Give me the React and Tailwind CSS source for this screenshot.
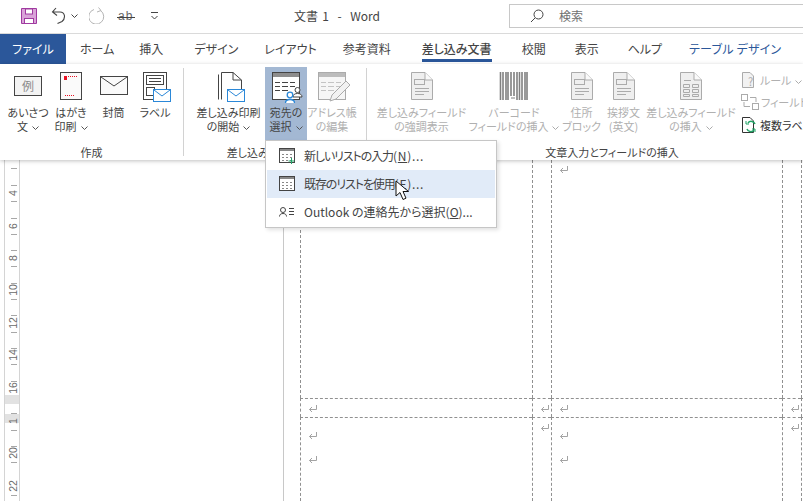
const INK = '#444444';
const DIS = '#ababab';
const BLUE = '#2b88d8';

function Chev({ color = '#555' }) {
  return (
    <svg className="inline-block ml-[4px] align-[1px]" width="7" height="4" viewBox="0 0 7 4" fill="none">
      <path d="M.5.5 3.5 3.5 6.5.5" stroke={color} />
    </svg>
  );
}

// blue envelope that sits on the corner of a few icons
function Env({ x, y }) {
  return (
    <g>
      <rect x={x + 0.5} y={y + 0.5} width="17" height="12" fill="#fff" stroke={BLUE} />
      <path d={`M${x + 1} ${y + 1}l8 6 8-6`} fill="none" stroke={BLUE} />
    </g>
  );
}

function Icon({ children }) {
  return (
    <svg width="36" height="32" viewBox="0 0 36 32" fill="none">
      {children}
    </svg>
  );
}

function GreetingIcon() {
  return (
    <Icon>
      <rect x="4.5" y="5.5" width="27" height="19" fill="#f3f3f3" stroke={INK} />
      <text x="18" y="20" textAnchor="middle" fontSize="12" fill="#8a8a8a" fontFamily="Noto Sans CJK JP">例</text>
    </Icon>
  );
}

function PostcardIcon() {
  return (
    <Icon>
      <rect x="7.5" y="1.5" width="21" height="27" fill="#fafafa" stroke={INK} />
      <rect x="11" y="5" width="3" height="4" fill="#e81123" />
      <path d="M15 5.5h9M12 24.5h10" stroke="#e81123" strokeDasharray="1 1" />
    </Icon>
  );
}

function EnvelopeIcon() {
  return (
    <Icon>
      <rect x="4.5" y="5.5" width="27" height="18" fill="#fafafa" stroke={INK} />
      <path d="M5 6l13 9 13-9" stroke={INK} />
    </Icon>
  );
}

function LabelIcon() {
  return (
    <Icon>
      <rect x="6.5" y="1.5" width="23" height="27" fill="#fff" stroke={INK} />
      <rect x="9.500" y="4.500" width="17" height="9" stroke={INK} />
      <path d="M12 7.500h12M12 10.500h12" stroke={INK} />
      <rect x="9.500" y="16.500" width="8" height="8" stroke={INK} />
      <Env x={16} y={18} />
    </Icon>
  );
}

function MergeStartIcon() {
  return (
    <Icon>
      <path d="M7.500 28.500V3.500M10.500 28.500V1.500H22L30.500 9V18" stroke={INK} fill="#fff" />
      <path d="M22 1.500V9H30.500" stroke={INK} />
      <Env x={16} y={18} />
    </Icon>
  );
}

function TableLines({ stroke }) {
  return <path d="M7 11.500h5M14 11.500h6M22 11.500h5M7 15.500h5M14 15.500h6M22 15.500h5M7 19.500h5M14 19.500h6" stroke={stroke} />;
}

function RecipientIcon() {
  return (
    <Icon>
      <rect x="4.500" y="1.500" width="27" height="27" fill="#fff" stroke={INK} />
      <rect x="5" y="2" width="26" height="4" fill="#8d8d8d" />
      <TableLines stroke={INK} />
      <circle cx="29.500" cy="19" r="2.500" fill="#fff" stroke={INK} />
      <path d="M25 26c0-2.500 2-3.500 4.500-3.500s4.500 1 4.500 3.500z" fill="#fff" stroke={INK} />
      <circle cx="22" cy="24" r="2.800" fill="#fff" stroke={BLUE} strokeWidth="1.300" />
      <path d="M17.500 32c0-2.500 2-3.500 4.500-3.500s4.500 1 4.500 3.500" fill="#fff" stroke={BLUE} strokeWidth="1.300" />
    </Icon>
  );
}

function AddressEditIcon() {
  return (
    <Icon>
      <rect x="4.500" y="1.500" width="27" height="27" fill="#f6f6f6" stroke={DIS} />
      <rect x="5" y="2" width="26" height="4" fill="#bcbcbc" />
      <TableLines stroke="#c4c4c4" />
      <path d="M16 30l2-6 14-14 4 4-14 14z" fill="#f2f2f2" stroke={DIS} />
    </Icon>
  );
}

function DocBase({ children }) {
  return (
    <Icon>
      <path d="M7.500 1.500H21L28.500 9V28.500H7.500Z" fill="#efefef" stroke={DIS} />
      <path d="M21 1.500V9H28.500" stroke={DIS} fill="#fafafa" />
      {children}
    </Icon>
  );
}

function DocFieldIcon() {
  return (
    <DocBase>
      <rect x="10.500" y="8.500" width="10" height="5" stroke={DIS} />
      <path d="M11 17.500h14M11 20.500h14M11 23.500h9" stroke={DIS} />
    </DocBase>
  );
}

function DocGridIcon() {
  return (
    <DocBase>
      <path d="M11 9.500h7" stroke={DIS} />
      <path d="M10.500 13.500h6v3h-6zM19.500 13.500h6v3h-6zM10.500 18.500h6v3h-6zM19.500 18.500h6v3h-6zM10.500 23.500h6v2h-6zM19.500 23.500h6v2h-6z" stroke={DIS} />
    </DocBase>
  );
}

function BarcodeIcon() {
  return (
    <Icon>
      <path d="M4.500 1v28M7 1v28M10 1v28M12 1v28M15 1v24M18 1v24M21 1v28M23.500 1v28M26 1v28M29 1v28M31 1v28" stroke="#808080" strokeWidth="1.600" />
      <path d="M15 27h4" stroke="#808080" />
    </Icon>
  );
}

// big ribbon button: icon on top, up to two lines of text below
function RibbonButton({ w, icon, lines, chev, disabled, active }) {
  return (
    <div className={`flex flex-col items-center pt-[4px] shrink-0 h-[74px] ${w} ${active ? 'bg-[#a3b8d3]' : ''}`}>
      {icon}
      <div className={`mt-[2px] text-center text-[11px] leading-[14px] whitespace-nowrap ${disabled ? 'text-[#b0b0b0]' : 'text-[#444444]'}`}>
        {lines.map((line, i) => (
          <div key={i}>
            {line}
            {chev && i === lines.length - 1 && <Chev color={disabled ? DIS : '#555'} />}
          </div>
        ))}
      </div>
    </div>
  );
}

function Group({ w, label, children, pl = '' }) {
  return (
    <div className={`flex flex-col shrink-0 h-full ${w}`}>
      <div className={`flex flex-1 pt-[3px] ${pl}`}>{children}</div>
      <div className="h-[26px] text-center text-[11px] leading-[14px] pt-[4px] text-[#444444] whitespace-nowrap">{label}</div>
    </div>
  );
}

function Separator() {
  return <div className="w-px shrink-0 h-[88px] mt-[4px] bg-[#d2d2d2]" />;
}

function SmallRuleIcon() {
  return (
    <svg width="16" height="18" viewBox="0 0 16 18" fill="none">
      <path d="M1.500 1.500H9L12.500 5V16.500H1.500Z" fill="#f2f2f2" stroke={DIS} />
      <text x="7" y="15" fontSize="11" fill={DIS} fontFamily="Noto Sans CJK JP">?</text>
    </svg>
  );
}

function SmallFieldIcon() {
  return (
    <svg width="18" height="16" viewBox="0 0 18 16" fill="none">
      <rect x="0.500" y="0.500" width="6" height="6" stroke={DIS} />
      <rect x="11.500" y="9.500" width="6" height="6" stroke={DIS} />
      <path d="M9 3.500h6V8M9 12.500H3V8" stroke={DIS} />
    </svg>
  );
}

function SmallLabelsIcon() {
  return (
    <svg width="16" height="18" viewBox="0 0 16 18" fill="none">
      <path d="M1.500 1.500H9L12.500 5V16.500H1.500Z" fill="#fff" stroke="#333" />
      <path d="M14 8a4 4 0 0 0-7-1M6 13a4 4 0 0 0 7 1" stroke="#21a366" strokeWidth="1.500" />
      <path d="M5 5v3h3M14 16v-3h-3" stroke="#21a366" />
    </svg>
  );
}

function Ribbon() {
  return (
    <div className="flex h-[96px] bg-white overflow-hidden">
      <Group w="w-[183px]" label="作成" pl="pl-[7px]">
        <RibbonButton w="w-[42px]" icon={<GreetingIcon />} lines={['あいさつ', '文']} chev />
        <RibbonButton w="w-[44px]" icon={<PostcardIcon />} lines={['はがき', '印刷']} chev />
        <RibbonButton w="w-[41px]" icon={<EnvelopeIcon />} lines={['封筒']} />
        <RibbonButton w="w-[42px]" icon={<LabelIcon />} lines={['ラベル']} />
      </Group>
      <Separator />
      <Group w="w-[182px]" label="差し込み印刷の開始" pl="pl-[8px]">
        <RibbonButton w="w-[73px]" icon={<MergeStartIcon />} lines={['差し込み印刷', 'の開始']} chev />
        <RibbonButton w="w-[42px]" icon={<RecipientIcon />} lines={['宛先の', '選択']} chev active />
        <RibbonButton w="w-[50px]" icon={<AddressEditIcon />} lines={['アドレス帳', 'の編集']} disabled />
      </Group>
      <Separator />
      <Group w="w-[490px]" label="文章入力とフィールドの挿入" pl="pl-[9px]">
        <RibbonButton w="w-[91px]" icon={<DocFieldIcon />} lines={['差し込みフィールド', 'の強調表示']} disabled />
        <RibbonButton w="w-[94px]" icon={<BarcodeIcon />} lines={['バーコード', 'フィールドの挿入']} chev disabled />
        <RibbonButton w="w-[41px]" icon={<DocFieldIcon />} lines={['住所', 'ブロック']} disabled />
        <RibbonButton w="w-[43px]" icon={<DocFieldIcon />} lines={['挨拶文', '(英文)']} disabled />
        <RibbonButton w="w-[92px]" icon={<DocGridIcon />} lines={['差し込みフィールド', 'の挿入']} chev disabled />
        <div className="flex flex-col pl-[4px] pt-[3px] gap-[3px] text-[11px] leading-[18px] whitespace-nowrap">
          <div className="flex items-center gap-[3px] h-[19px] text-[#b0b0b0]"><SmallRuleIcon /><span>ルール<Chev color={DIS} /></span></div>
          <div className="flex items-center gap-[2px] h-[20px] text-[#b0b0b0]"><SmallFieldIcon /><span>フィールドの対応</span></div>
          <div className="flex items-center gap-[3px] h-[19px] text-[#333333]"><SmallLabelsIcon /><span>複数ラベルに反映</span></div>
        </div>
      </Group>
    </div>
  );
}

function TitleBar() {
  return (
    <div className="flex h-[34px] items-center bg-white border-b border-[#dadada] shrink-0">
      <div className="flex items-center pl-[21px] w-[294px] shrink-0 pb-[2px]">
        <svg width="16" height="16" viewBox="0 0 16 16" fill="none">
          <path d="M.5.5h15v15H.5z" fill="#d9a3d8" stroke="#a03aa0" />
          <rect x="4.500" y="1" width="7" height="5" fill="#fff" stroke="#a03aa0" />
          <rect x="3.500" y="10.500" width="9" height="5" fill="#fff" stroke="#a03aa0" />
        </svg>
        <svg className="ml-[14px]" width="16" height="17" viewBox="0 0 16 17" fill="none">
          <path d="M5 1 1.500 5 6 8.500M1.500 5H9c5 0 6 6 2 9.500L6.500 16.500" stroke={INK} strokeWidth="1.100" />
        </svg>
        <Chev color={INK} />
        <svg className="ml-[11px]" width="17" height="17" viewBox="0 0 17 17" fill="none">
          <path d="M9.500 .5l2.500 3-4 1.500" stroke="#b5b5b5" />
          <path d="M11.500 3.500A7.500 7.500 0 1 1 5 2.500" stroke="#b5b5b5" />
        </svg>
        <span className="ml-[12px] relative text-[12px] leading-none text-[#666666] tracking-[1px] font-['Liberation_Sans',sans-serif]">
          ab
          <span className="absolute left-[-1px] right-[-2px] top-[7px] h-px bg-[#444444]" />
        </span>
        <svg className="ml-[18px]" width="7" height="8" viewBox="0 0 7 8" fill="none">
          <path d="M0 .500h7M.5 4l3 3 3-3" stroke={INK} />
        </svg>
      </div>
      <div className="w-[215px] shrink-0 text-[12px] text-[#444444] whitespace-pre pb-[2px] [word-spacing:1.600px]">文書 1  -  Word</div>
      <div className="flex items-center h-[24px] flex-1 border border-[#c8c8c8] border-r-0 -mt-[1px] pl-[20px]">
        <svg width="14" height="14" viewBox="0 0 14 14" fill="none">
          <circle cx="8.500" cy="5.500" r="4.500" stroke={INK} />
          <path d="M5 9 1 13" stroke={INK} />
        </svg>
        <span className="ml-[15px] text-[12px] text-[#707070]">検索</span>
      </div>
    </div>
  );
}

function Tabs() {
  const tabs = [
    ['ホーム', 'ml-[14px]'],
    ['挿入', 'ml-[25px]'],
    ['デザイン', 'ml-[31px]'],
    ['レイアウト', 'ml-[26px]'],
    ['参考資料', 'ml-[26px]'],
  ];
  return (
    <div className="flex h-[30px] bg-white shrink-0 text-[12px] text-[#444444] leading-[30px] whitespace-nowrap">
      <div className="w-[66px] bg-[#2b579a] text-white text-center">ファイル</div>
      {tabs.map(([name, ml]) => (
        <div key={name} className={ml}>{name}</div>
      ))}
      <div className="ml-[31px] h-[28px] border-b-[3px] border-[#2b579a] font-medium">差し込み文書</div>
      <div className="ml-[30px]">校閲</div>
      <div className="ml-[29px]">表示</div>
      <div className="ml-[29px]">ヘルプ</div>
      <div className="ml-[27px] text-[#2b579a] tracking-[0.2px]">テーブル デザイン</div>
    </div>
  );
}

function VerticalRuler() {
  const numbers = [[193, '4'], [226, '6'], [258, '8'], [290, '10'], [323, '12'], [355, '14'], [388, '16'], [421, '1'], [453, '20'], [486, '22']];
  const ticks = [168, 185, 201, 218, 234, 250, 266, 283, 299, 315, 332, 348, 364, 381, 413, 430, 446, 462, 495];
  return (
    <svg className="shrink-0" width="20" height="341" viewBox="0 160 20 341" fill="none">
      <path d="M4.500 160v341M19.500 160v341" stroke="#d4d4d4" />
      <rect x="5" y="395" width="14" height="9" fill="#e2e2e2" />
      <rect x="5" y="414" width="14" height="9" fill="#e2e2e2" />
      {ticks.map((y) => (
        <path key={y} d={`M11 ${y}.5h6`} stroke="#a8a8a8" />
      ))}
      {numbers.map(([y, n]) => (
        <text key={y} x="13" y={y} transform={`rotate(-90 13 ${y})`} textAnchor="middle" dominantBaseline="central" fontSize="10.500" fill="#6a6a6a" fontFamily="Liberation Sans">{n}</text>
      ))}
    </svg>
  );
}

function ParaMark({ className = '' }) {
  return (
    <svg className={`block ${className}`} width="10" height="9" viewBox="0 0 10 9" fill="none">
      <path d="M8.500 0v4.500H1.500M4 2 1.500 4.500 4 7" stroke="#a3a3a3" />
    </svg>
  );
}

function Cell({ className = '', children }) {
  return <div className={`border-l border-dashed border-[#909090] ${className}`}>{children}</div>;
}

function Page() {
  return (
    <div className="flex flex-1 h-[341px] overflow-hidden bg-white relative">
      <VerticalRuler />
      <div className="w-[264px] shrink-0 border-r border-[#c8c8c8]" />
      <div className="ml-[16px] grid grid-cols-[232px_19px_231px_19px_40px] grid-rows-[238px_19px_84px] shrink-0">
        <Cell />
        <Cell />
        <Cell className="pl-[7px] pt-[6px]"><ParaMark /></Cell>
        <Cell />
        <Cell />
        <Cell className="border-t pl-[7px] pt-[6px]"><ParaMark /></Cell>
        <Cell className="border-t pl-[7px] pt-[6px]"><ParaMark /></Cell>
        <Cell className="border-t pl-[7px] pt-[6px]"><ParaMark /></Cell>
        <Cell className="border-t pl-[7px] pt-[6px]"><ParaMark /></Cell>
        <Cell className="border-t" />
        <Cell className="border-t pl-[7px] pt-[14px]"><ParaMark /><ParaMark className="mt-[15px]" /></Cell>
        <Cell className="border-t pl-[7px] pt-[6px]"><ParaMark /></Cell>
        <Cell className="border-t pl-[7px] pt-[14px]"><ParaMark /><ParaMark className="mt-[15px]" /></Cell>
        <Cell className="border-t pl-[7px] pt-[6px]"><ParaMark /></Cell>
        <Cell className="border-t" />
      </div>
    </div>
  );
}

function MenuItem({ icon, hover, children }) {
  return (
    <div className={`flex items-center h-[28px] pl-[12px] ${hover ? 'bg-[#e1ebf8]' : ''}`}>
      <div className="w-[16px] flex justify-center shrink-0">{icon}</div>
      <div className="ml-[9px] text-[12px] text-[#444444] whitespace-nowrap">{children}</div>
    </div>
  );
}

function MenuTableIcon({ plus }) {
  return (
    <svg width="16" height="16" viewBox="0 0 16 16" fill="none">
      <rect x="0.500" y="0.500" width="15" height="14" fill="#fff" stroke="#444" />
      <rect x="1" y="1" width="14" height="2" fill="#888" />
      <path d="M3 6.500h2M7 6.500h2M11 6.500h2M3 9.500h2M7 9.500h2M11 9.500h2M3 12.500h2M7 12.500h2M11 12.500h2" stroke="#888" />
      {plus && <path d="M12.500 10v6M9.500 13h6" stroke="#21a366" />}
    </svg>
  );
}

function RecipientMenu() {
  return (
    <div className="absolute left-[265px] top-[140px] w-[232px] h-[88px] py-[1px] px-[1px] bg-white border border-[#c6c6c6] shadow-[2px_2px_4px_rgba(0,0,0,0.12)]">
      <MenuItem icon={<MenuTableIcon plus />}>
        <span className="tracking-[-1.100px]">新しいリストの入力</span>
        <span className="tracking-[0.700px]">(<u>N</u>)...</span>
      </MenuItem>
      <MenuItem hover icon={<MenuTableIcon />}>
        <span className="tracking-[-1.100px]">既存のリストを使用</span>
        <span className="tracking-[0.700px]">(<u>E</u>)...</span>
      </MenuItem>
      <MenuItem
        icon={
          <svg width="16" height="10" viewBox="0 0 16 10" fill="none">
            <circle cx="4" cy="3" r="2.500" stroke="#444" />
            <path d="M.5 9.500c0-2 1.500-3 3.500-3s3.500 1 3.500 3M10 1.500h5M10 4.500h5M10 7.500h5" stroke="#444" />
          </svg>
        }
      >
        Outlook の連絡先から選択(<u>O</u>)...
      </MenuItem>
    </div>
  );
}

function Cursor() {
  return (
    <svg className="absolute left-[395px] top-[180px]" width="14" height="21" viewBox="0 0 14 21" fill="none">
      <path d="M1 1v15l4-3.500 3 7 3-1.300-3-6.700h5.500z" fill="#fff" stroke="#111" strokeLinejoin="round" />
    </svg>
  );
}

export default function App() {
  return (
    <div className="relative w-[803px] h-[501px] overflow-hidden bg-white flex flex-col font-['Noto_Sans_CJK_JP','Noto_Sans',sans-serif] [font-feature-settings:'palt']">
      <TitleBar />
      <Tabs />
      <div className="relative z-10 shadow-[0_1px_4px_rgba(0,0,0,0.25)]">
        <Ribbon />
      </div>
      <Page />
      <div className="absolute inset-0 z-20 pointer-events-none">
        <RecipientMenu />
        <Cursor />
      </div>
    </div>
  );
}
